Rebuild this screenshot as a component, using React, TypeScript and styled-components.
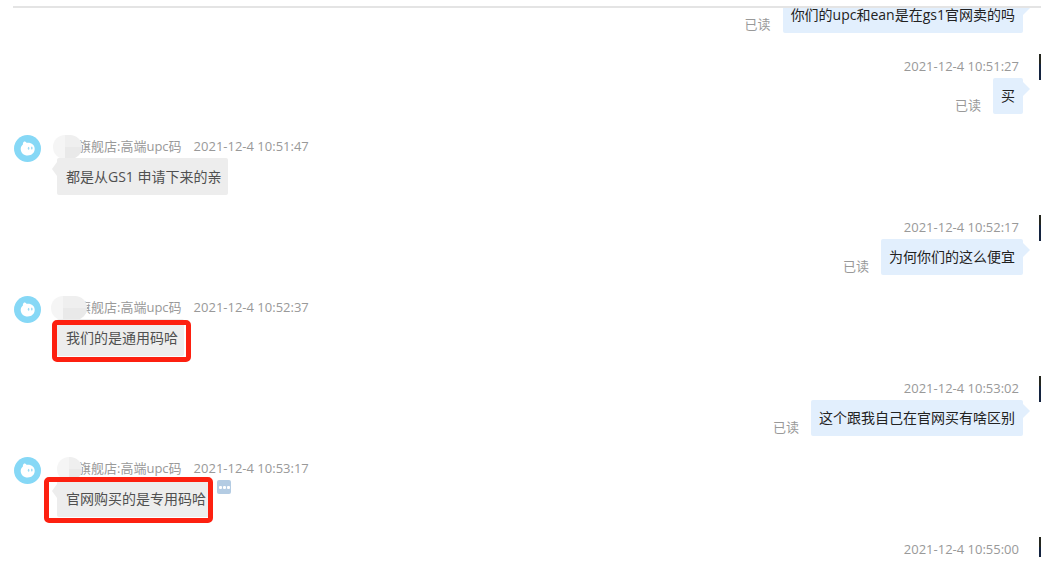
import React from "react";
import styled, { createGlobalStyle } from "styled-components";

const GlobalStyle = createGlobalStyle`
  * { box-sizing: border-box; }
  body {
    margin: 0;
    background: #fff;
    font-family: "Open Sans", "Noto Sans CJK SC", sans-serif;
    font-size: 13px;
  }
`;

const Page = styled.main`
  padding: 6px 0 19px 13px;
`;

const Viewport = styled.section`
  overflow: hidden;
  border-top: 2px solid #e4e4e4;
`;

/* The list is scrolled, so its first bubble is partly under the top rule. */
const MessageList = styled.ol`
  margin: -11px 0 0;
  padding: 0;
  list-style: none;
`;

const SentItem = styled.li`
  display: flex;
  justify-content: flex-end;
  gap: 16px;
`;

const ReceivedItem = styled.li`
  display: flex;
  align-items: flex-start;
  gap: 16px;
  padding-left: 1px;
`;

const SentBody = styled.div`
  display: flex;
  flex-direction: column;
  align-items: flex-end;
`;

const ReceivedBody = styled.div`
  display: flex;
  flex-direction: column;
  align-items: flex-start;
`;

const SentMeta = styled.div`
  padding-right: 4px;
  line-height: 24px;
  color: #999;
`;

const ReceivedMeta = styled.div`
  position: relative;
  display: flex;
  gap: 12px;
  padding-left: 21px;
  line-height: 23px;
  color: #999;
`;

const SentLine = styled.div`
  display: flex;
  align-items: flex-end;
  gap: 12px;
  margin-bottom: 21px;
`;

const ReceivedLine = styled.div`
  display: flex;
  align-items: flex-start;
  gap: 5px;
  margin-bottom: 20px;
`;

const ReadMark = styled.span`
  line-height: 18px;
  color: #999;
`;

const Bubble = styled.p`
  position: relative;
  margin: 0;
  border-radius: 2px;
  font-size: 14px;
  line-height: 20px;

  &::after {
    content: "";
    position: absolute;
    top: 4px;
    border: 7px solid transparent;
  }
`;

const SentBubble = styled(Bubble)`
  padding: 8px;
  background: #e2effd;
  color: #222;

  &::after {
    left: 100%;
    border-left-color: #e2effd;
    border-right-width: 0;
  }
`;

const ReceivedBubble = styled(Bubble)`
  padding: 9px 6px 8px 9px;
  background: #ededed;
  color: #505050;

  &::after {
    right: 100%;
    border-right: 5px solid #ededed;
    border-left-width: 0;
  }
`;

const Highlight = styled.span<{ $wide?: boolean }>`
  position: absolute;
  z-index: 1;
  top: ${(p) => (p.$wide ? "-3px" : "1px")};
  bottom: -6px;
  left: ${(p) => (p.$wide ? "-13px" : "-5px")};
  right: ${(p) => (p.$wide ? "-1px" : "-7px")};
  border: 5px solid #fd2010;
  border-radius: 5px;
`;

const NameMask = styled.span<{ $left: number; $width: number }>`
  position: absolute;
  top: 0;
  left: ${(p) => p.$left}px;
  width: ${(p) => p.$width}px;
  height: 24px;
  border-radius: 12px;
  background:
    linear-gradient(#efefef, #efefef) 100% 0 / calc(100% - 12px) 12px no-repeat,
    linear-gradient(#e9e9e9, #e9e9e9) 100% 100% / calc(100% - 12px) 12px no-repeat,
    #f5f5f5;
`;

const MyAvatar = styled.div<{ $cut?: boolean }>`
  width: 2px;
  height: ${(p) => (p.$cut ? 20 : 26)}px;
  background: linear-gradient(#25271f 0 10px, #14233f 10px);
`;

const AvatarGap = styled.div`
  width: 2px;
`;

const ShopAvatar = styled.svg`
  flex: none;
  width: 27px;
  height: 27px;
`;

const MoreButton = styled.button`
  display: flex;
  align-items: center;
  justify-content: center;
  gap: 1px;
  width: 14px;
  height: 14px;
  padding: 0;
  border: 0;
  border-radius: 2px;
  background: #b4cce3;
`;

const Dot = styled.span`
  width: 3px;
  height: 3px;
  border-radius: 1px;
  background: #fff;
`;

type SentProps = { time?: string; text?: string };

function Sent({ time, text }: SentProps) {
  return (
    <SentItem>
      <SentBody>
        {time && (
          <SentMeta>
            <time>{time}</time>
          </SentMeta>
        )}
        {text && (
          <SentLine>
            <ReadMark>已读</ReadMark>
            <SentBubble>{text}</SentBubble>
          </SentLine>
        )}
      </SentBody>
      {time ? <MyAvatar $cut={!text} /> : <AvatarGap />}
    </SentItem>
  );
}

type ReceivedProps = {
  time: string;
  text: string;
  mask: { left: number; width: number };
  highlight?: "narrow" | "wide";
  more?: boolean;
};

function Received({ time, text, mask, highlight, more }: ReceivedProps) {
  return (
    <ReceivedItem>
      <ShopAvatar viewBox="0 0 27 27" aria-hidden="true">
        <circle cx="13.5" cy="13.5" r="13.5" fill="#86d8f6" />
        <path
          d="M10.200 6.600c1.300 0 2 .6 2.500 1.300 4.400-.6 8 1.900 8 5.900 0 4-3 6.700-7 6.700-4 0-7-2.700-7-6.500 0-1.900.8-3.400 2.200-4.500-.1-1.300.3-2.300 1.300-2.900z"
          fill="#fff"
        />
        <ellipse cx="14.600" cy="13.300" rx="0.800" ry="1.500" fill="#9bdcf5" />
        <ellipse cx="17.800" cy="13.100" rx="0.800" ry="1.500" fill="#9bdcf5" />
      </ShopAvatar>
      <ReceivedBody>
        <ReceivedMeta>
          <span>旗舰店:高端upc码</span>
          <time>{time}</time>
          <NameMask $left={mask.left} $width={mask.width} />
        </ReceivedMeta>
        <ReceivedLine>
          <ReceivedBubble>
            {text}
            {highlight && <Highlight $wide={highlight === "wide"} />}
          </ReceivedBubble>
          {more && (
            <MoreButton type="button" aria-label="更多">
              <Dot />
              <Dot />
              <Dot />
            </MoreButton>
          )}
        </ReceivedLine>
      </ReceivedBody>
    </ReceivedItem>
  );
}

export default function App() {
  return (
    <>
      <GlobalStyle />
      <Page>
        <Viewport>
          <MessageList>
            <Sent text="你们的upc和ean是在gs1官网卖的吗" />
            <Sent time="2021-12-4 10:51:27" text="买" />
            <Received
              time="2021-12-4 10:51:47"
              text="都是从GS1 申请下来的亲"
              mask={{ left: -4, width: 29 }}
            />
            <Sent time="2021-12-4 10:52:17" text="为何你们的这么便宜" />
            <Received
              time="2021-12-4 10:52:37"
              text="我们的是通用码哈"
              mask={{ left: -6, width: 36 }}
              highlight="narrow"
            />
            <Sent time="2021-12-4 10:53:02" text="这个跟我自己在官网买有啥区别" />
            <Received
              time="2021-12-4 10:53:17"
              text="官网购买的是专用码哈"
              mask={{ left: 0, width: 25 }}
              highlight="wide"
              more
            />
            <Sent time="2021-12-4 10:55:00" />
          </MessageList>
        </Viewport>
      </Page>
    </>
  );
}
